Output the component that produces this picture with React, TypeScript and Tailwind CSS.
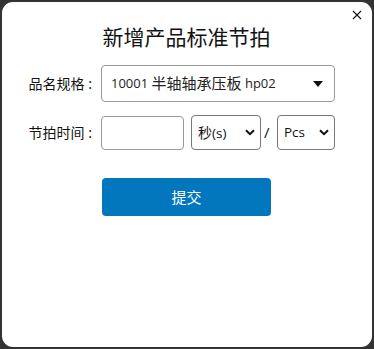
import React from "react";

const font = { fontFamily: '"Noto Sans", "Noto Sans CJK SC", sans-serif' };
const latin = { fontFamily: '"Open Sans", "Noto Sans CJK SC", sans-serif' };

export default function App() {
  return (
    <div className="w-[374px] h-[349px] bg-[#333333] p-[2px]" style={font}>
      <div className="relative w-[370px] h-[345px] bg-white rounded-[11px] pt-[21px]">
        <button className="absolute right-[10px] top-[7px] w-[11px] h-[11px] flex items-center justify-center">
          <svg width="10" height="10" viewBox="0 0 10 10">
            <path d="M1 1 L9 9 M9 1 L1 9" stroke="#111" strokeWidth="1.1" fill="none" />
          </svg>
        </button>
        <h1 className="text-center text-[21px] leading-[28px] text-[#111] font-normal pr-[1px]">新增产品标准节拍</h1>
        <div className="mt-[14px] flex items-center">
          <div className="w-[91px] text-right text-[14px] text-[#111] pr-[1px]">品名规格 :</div>
          <div className="ml-[8px] w-[234px] h-[37px] border border-[#9a9a9a] rounded-[4px] flex items-center pl-[9px] pr-[10px] justify-between">
            <span className="text-[#222] flex items-center">
              <span className="text-[13px]" style={latin}>10001&nbsp;</span>
              <span className="text-[15px]">半轴轴承压板</span>
              <span className="text-[13px]" style={latin}>&nbsp;hp02</span>
            </span>
            <svg width="12" height="8" viewBox="0 0 12 8">
              <path d="M1 1 L11 1 L6 7 Z" fill="#111" />
            </svg>
          </div>
        </div>
        <div className="mt-[13px] flex items-center">
          <div className="w-[91px] text-right text-[14px] text-[#111] pr-[1px]">节拍时间 :</div>
          <input className="ml-[8px] w-[83px] h-[34px] border border-[#9a9a9a] rounded-[4px] outline-none" />
          <div className="ml-[7px] w-[70px] h-[35px] border border-[#777] rounded-[4px] flex items-center justify-between pl-[6px] pr-[5px]">
            <span className="text-[14px] text-[#111]">秒<span style={latin} className="text-[13.5px]">(s)</span></span>
            <svg width="10" height="7" viewBox="0 0 10 7">
              <path d="M1 1.2 L5 5.2 L9 1.2" stroke="#111" strokeWidth="2" fill="none" />
            </svg>
          </div>
          <span className="ml-[3px] text-[15px] text-[#111] w-[7px]" style={latin}>/</span>
          <div className="ml-[6px] w-[58px] h-[35px] border border-[#777] rounded-[4px] flex items-center justify-between pl-[6px] pr-[5px]">
            <span className="text-[13.5px] text-[#111]" style={latin}>Pcs</span>
            <svg width="10" height="7" viewBox="0 0 10 7">
              <path d="M1 1.2 L5 5.2 L9 1.2" stroke="#111" strokeWidth="2" fill="none" />
            </svg>
          </div>
        </div>
        <div className="mt-[28px] pl-[100px]">
          <button className="w-[169px] h-[38px] bg-[#0277bd] rounded-[4px] text-white text-[15px]">提交</button>
        </div>
      </div>
    </div>
  );
}
